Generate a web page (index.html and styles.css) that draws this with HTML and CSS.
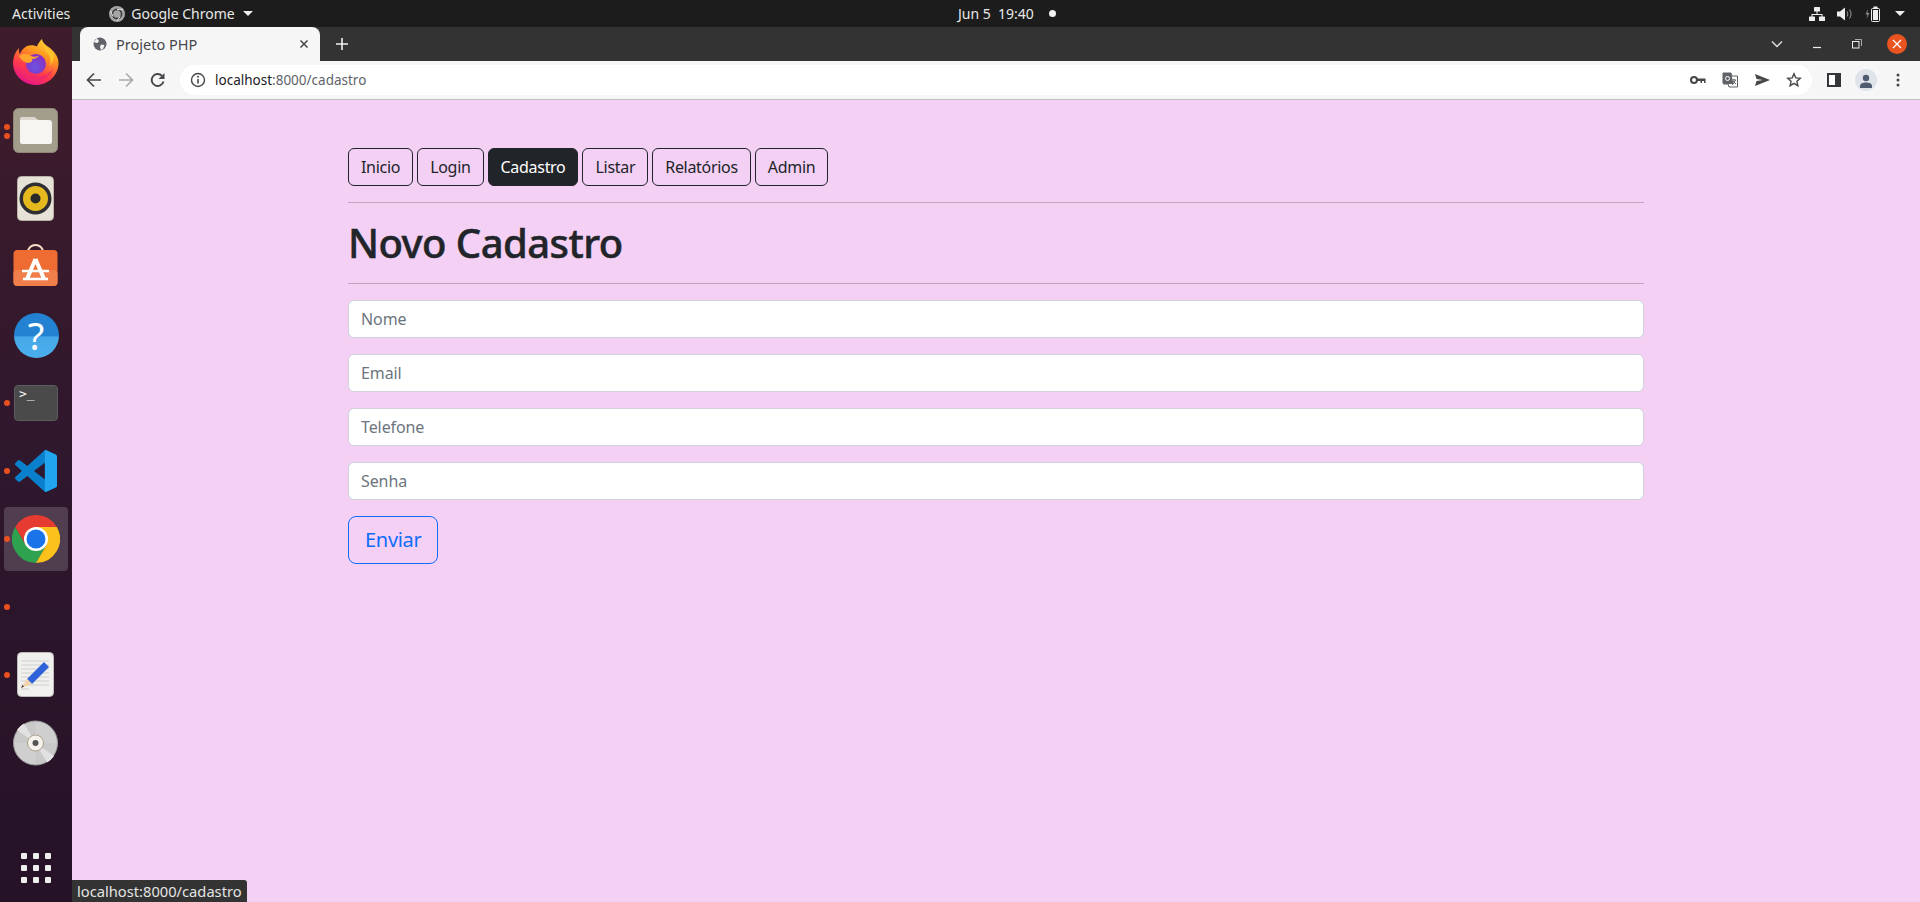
FILE: index.html
```html
<!DOCTYPE html>
<html lang="pt-BR">
<head>
  <meta charset="UTF-8" />
  <title>Projeto PHP</title>
  <link rel="stylesheet" href="styles.css">
</head>
<body>

  <!-- gnome top bar -->
  <div class="topbar">
    <div class="topbar-left">
      <span>Activities</span>
      <span class="app-name">
        <svg width="16" height="16" viewBox="0 0 16 16"><circle cx="8" cy="8" r="8" fill="#a5a5a5"/><circle cx="8" cy="8" r="4.600" fill="none" stroke="#3a3a3a" stroke-width="1.600"/><path d="M8 3.400h6M4 10.500L1.500 5M11 10.500L8 15" stroke="#e4e4e4" stroke-width="1"/></svg>
        Google Chrome
        <i class="caret"></i>
      </span>
    </div>
    <div class="clock">Jun 5&nbsp;&nbsp;19:40 <i class="clock-dot"></i></div>
    <div class="tray">
      <svg width="16" height="14" viewBox="0 0 16 14" fill="#eee"><rect x="5" y="0" width="6" height="4.500" rx=".6"/><rect x="0" y="9.500" width="6" height="4.500" rx=".6"/><rect x="10" y="9.500" width="6" height="4.500" rx=".6"/><path d="M7.500 4h1v3h5v3h-1V8h-9v2h-1V7h5z"/></svg>
      <svg width="16" height="14" viewBox="0 0 16 14"><path d="M0 4.500h3L8 .5v13l-5-4H0z" fill="#eee"/><path d="M10 4.500q1.500 2.500 0 5M12.500 2.500q3 4.500 0 9" fill="none" stroke="#888" stroke-width="1.100"/></svg>
      <svg width="16" height="16" viewBox="0 0 16 16"><path d="M3 3L0.500 8.500h2L1.500 13l3-6h-2z" fill="#888"/><rect x="6.500" y="2.500" width="8" height="13" rx="1" fill="none" stroke="#eee"/><rect x="8.500" y="0.500" width="4" height="2" fill="#eee"/><rect x="8" y="4" width="5" height="10" fill="#eee"/></svg>
      <i class="caret"></i>
    </div>
  </div>

  <div class="desktop">

    <!-- ubuntu dock -->
    <nav class="dock">
      <div class="dock-item">
        <svg class="firefox" width="46" height="46" viewBox="0 0 46 46">
          <defs>
            <linearGradient id="ffBody" x1="0.850" y1="0" x2="0.350" y2="1"><stop offset="0" stop-color="#ffe13d"/><stop offset=".35" stop-color="#ff9a1f"/><stop offset=".7" stop-color="#ff3a4c"/><stop offset="1" stop-color="#e5148a"/></linearGradient>
            <radialGradient id="ffGlobe" cx=".45" cy=".65" r=".6"><stop offset="0" stop-color="#6a55e4"/><stop offset="1" stop-color="#8a2fc0"/></radialGradient>
          </defs>
          <path d="M29 0c.5 4 4 6 8 9 6 5 8.500 10 8.500 15 0 12-10 22-22.500 22S0 36 0 24c0-6 2-11 6-15-.5 2.500 0 4.500 1 6 1-3 3-6 7-8 4-1.500 8-.5 10 .5C25 4.500 27 2 29 0z" fill="url(#ffBody)"/>
          <path d="M6 30c2 8 10 13 18 12 7-1 13-5 16-12-4 5-9 8-16 8S10 35 6 30z" fill="#f02a6a"/>
          <circle cx="23" cy="25" r="10" fill="url(#ffGlobe)"/>
          <path d="M6 17c4-3 9-2 12 0 3 1.500 6 .5 8-.5-1.500 2.500-4 3.500-7 3.500 1 2-1 3-3 4-4 0-8-3-10-7z" fill="#ffa52e"/>
          <path d="M30 4c-1 5 3 8 6 12 2 3 2 8 1 11 3-4 5-9 3-13-2-3-7-5-10-10z" fill="#ffc32b"/>
        </svg>
      </div>
      <div class="dock-item">
        <i class="dots"><b></b><b></b></i>
        <svg width="46" height="46" viewBox="0 0 46 46">
          <rect x=".5" y=".5" width="44" height="44" rx="5" fill="#a39d8c" stroke="#8e8878"/>
          <path d="M7 12a3 3 0 0 1 3-3h11l4 3h11a3 3 0 0 1 3 3v19a2 2 0 0 1-2 2H9a2 2 0 0 1-2-2z" fill="#f7f5f2"/>
          <path d="M7 12a3 3 0 0 1 3-3h11l4 3z" fill="#dcd8cf"/>
        </svg>
      </div>
      <div class="dock-item">
        <svg width="38" height="46" viewBox="0 0 38 46">
          <rect x=".5" y=".5" width="36" height="44" rx="4" fill="#e6e2d8" stroke="#b8b3a6"/>
          <circle cx="18.500" cy="22.500" r="16" fill="#2f2f33"/>
          <circle cx="18.500" cy="22.500" r="12.500" fill="#e6b91e"/>
          <circle cx="18.500" cy="22.500" r="5" fill="#2a2a2a"/>
        </svg>
      </div>
      <div class="dock-item">
        <svg width="46" height="46" viewBox="0 0 46 46">
          <path d="M15 8a7.500 7 0 0 1 15 0" fill="none" stroke="#f8dcc4" stroke-width="2"/>
          <rect x=".5" y="6" width="44" height="36" rx="4" fill="#ee6b32"/>
          <rect x=".5" y="26" width="44" height="16" rx="4" fill="#f07f4b"/>
          <path d="M22.500 15L14 35M22.500 15L31 35" stroke="#fff" stroke-width="4" fill="none"/>
          <path d="M9 27h27M10 35h25" stroke="#fff" stroke-width="2.400"/>
        </svg>
      </div>
      <div class="dock-item">
        <div class="help-icon">?</div>
      </div>
      <div class="dock-item">
        <i class="dots"><b></b></i>
        <div class="terminal-icon">&gt;_</div>
      </div>
      <div class="dock-item">
        <i class="dots"><b></b></i>
        <svg width="42" height="42" viewBox="0 0 100 100">
          <path fill="#0a7fcb" fill-rule="evenodd" d="M96.500 10.800 75.900.9a6.200 6.200 0 0 0-7.100 1.200L29.400 38 12.200 25a4.200 4.200 0 0 0-5.300.2l-5.500 5a4.200 4.200 0 0 0 0 6.200L16.300 50 1.400 63.600a4.200 4.200 0 0 0 0 6.200l5.500 5a4.200 4.200 0 0 0 5.300.2L29.400 62l39.400 35.900a6.200 6.200 0 0 0 7.100 1.200l20.600-9.900A6.200 6.200 0 0 0 100 83.600V16.400a6.200 6.200 0 0 0-3.500-5.600zM75 72.700 45.100 50 75 27.300z"/>
          <path fill="#21a5ee" d="M75.900 99.100 96.500 89.200A6.200 6.200 0 0 0 100 83.600V16.400a6.200 6.200 0 0 0-3.500-5.600L75.900.9A6.200 6.200 0 0 0 71 1v98a6.200 6.200 0 0 0 4.900.1z"/>
        </svg>
      </div>
      <div class="dock-item dock-item-active">
        <i class="dots"><b></b></i>
        <svg width="48" height="48" viewBox="0 0 48 48">
          <path d="M24 12H44.800A24 24 0 0 0 3.200 12L13.600 30z" fill="#e53b30"/>
          <path d="M13.600 30L3.200 12A24 24 0 0 0 24 48L34.400 30z" fill="#2fa24f"/>
          <path d="M34.400 30L24 48A24 24 0 0 0 44.800 12H24z" fill="#fcc11a"/>
          <circle cx="24" cy="24" r="12" fill="#fff"/>
          <circle cx="24" cy="24" r="9.500" fill="#1a73e8"/>
        </svg>
      </div>
      <div class="dock-item">
        <i class="dots"><b></b></i>
      </div>
      <div class="dock-item">
        <i class="dots"><b></b></i>
        <svg width="38" height="46" viewBox="0 0 38 46">
          <rect x=".5" y=".5" width="36" height="44" rx="4" fill="#f0f0ee" stroke="#bdbdb8"/>
          <path d="M4 9h28M4 13h28M4 17h28M4 21h28M4 25h28M4 29h28M4 33h28M4 37h8" stroke="#cfcfcc"/>
          <path d="M10 27L27 10l5 5-17 17z" fill="#2e62d9"/>
          <path d="M10 27l5 5-11 4z" fill="#f3d3ae"/>
          <path d="M4 36l1.500-3 1.500 1.500z" fill="#333"/>
        </svg>
      </div>
      <div class="dock-item">
        <svg width="46" height="46" viewBox="0 0 46 46">
          <circle cx="22.500" cy="23" r="22" fill="#cfcfcf" stroke="#9a9a9a"/>
          <path d="M4 10L22.500 23 11 3.500A22 22 0 0 0 4 10zM41 36L22.500 23 34 42.500A22 22 0 0 0 41 36z" fill="#f5f5f5"/>
          <path d="M22.500 1v22L1 23A22 22 0 0 1 22.500 1zM22.500 45V23h22A22 22 0 0 1 22.500 45z" fill="#bdbdbd" opacity=".35"/>
          <circle cx="22.500" cy="23" r="8" fill="#f4f2ea" stroke="#a89f88"/>
          <circle cx="22.500" cy="23" r="3" fill="#555"/>
        </svg>
      </div>
      <div class="dock-item dock-apps">
        <div class="apps-grid"><b></b><b></b><b></b><b></b><b></b><b></b><b></b><b></b><b></b></div>
      </div>
    </nav>

    <div class="browser">
      <div class="tabstrip">
        <div class="tab">
          <svg width="16" height="16" viewBox="0 0 16 16"><circle cx="8" cy="8" r="6.500" fill="#5f6368"/><path d="M5 2.500L7 5 5.500 7 3 6.500 1.800 6zM9 8.500l3.500.5L11 13l-2 1-1-3z" fill="#f6f6f6"/></svg>
          <span class="tab-title">Projeto PHP</span>
          <svg class="tab-close" width="10" height="10" viewBox="0 0 10 10"><path d="M1.500 1.500l7 7M8.500 1.500l-7 7" stroke="#45474a" stroke-width="1.500"/></svg>
        </div>
        <svg class="new-tab" width="12" height="12" viewBox="0 0 12 12"><path d="M6 0v12M0 6h12" stroke="#f1f1f1" stroke-width="1.600"/></svg>
        <div class="window-controls">
          <span class="win-btn"><svg width="12" height="8" viewBox="0 0 12 8"><path d="M1 1.500l5 5 5-5" fill="none" stroke="#ddd" stroke-width="1.500"/></svg></span>
          <span class="win-btn"><svg width="10" height="10" viewBox="0 0 10 10"><path d="M1 8.500h8" stroke="#eee" stroke-width="1.200"/></svg></span>
          <span class="win-btn"><svg width="10" height="10" viewBox="0 0 10 10"><rect x=".5" y="2.500" width="6.500" height="6.500" fill="none" stroke="#eee"/><path d="M3 .5h6.500V7" fill="none" stroke="#aaa"/></svg></span>
          <span class="win-close"><svg width="10" height="10" viewBox="0 0 10 10"><path d="M1 1l8 8M9 1l-8 8" stroke="#fff" stroke-width="1.300"/></svg></span>
        </div>
      </div>

      <div class="toolbar">
        <span class="tool-btn"><svg width="16" height="16" viewBox="0 0 16 16"><path d="M15 8H2M8 1.500L1.500 8 8 14.500" fill="none" stroke="#45474a" stroke-width="1.700"/></svg></span>
        <span class="tool-btn"><svg width="16" height="16" viewBox="0 0 16 16"><path d="M1 8h13M8 1.500L14.500 8 8 14.500" fill="none" stroke="#a9abad" stroke-width="1.700"/></svg></span>
        <span class="tool-btn"><svg width="16" height="16" viewBox="0 0 16 16"><path d="M13.500 9.500A6 6 0 1 1 12 3.800" fill="none" stroke="#45474a" stroke-width="1.900"/><path d="M14.500 1v6h-6z" fill="#45474a"/></svg></span>
        <div class="omnibox">
          <svg width="16" height="16" viewBox="0 0 16 16"><circle cx="8" cy="8" r="6.500" fill="none" stroke="#45474a" stroke-width="1.400"/><path d="M8 7v4.500" stroke="#45474a" stroke-width="1.600"/><circle cx="8" cy="4.800" r="1" fill="#45474a"/></svg>
          <span class="url"><span class="url-host">localhost</span>:8000/cadastro</span>
          <div class="omni-actions">
            <span class="tool-btn"><svg width="16" height="10" viewBox="0 0 16 10"><circle cx="4" cy="5" r="3" fill="none" stroke="#45474a" stroke-width="2"/><path d="M7 3.500h8.500V8h-1.500V6H12v2h-1.500V6H7z" fill="#45474a"/></svg></span>
            <span class="tool-btn"><svg width="16" height="16" viewBox="0 0 16 16"><path d="M1 1h8l1 3h5.500v11H7l-1-3H2a1 1 0 0 1-1-1z" fill="#fff" stroke="#5f6368"/><path d="M1 1h8l2.500 11H2a1 1 0 0 1-1-1z" fill="#5f6368"/><circle cx="5.500" cy="6.500" r="2" fill="none" stroke="#fff"/><path d="M10 8h4M12 7v1M10.500 13l3-5M11 9l3 3" stroke="#5f6368"/></svg></span>
            <span class="tool-btn"><svg width="15" height="12" viewBox="0 0 15 12"><path d="M0 0l15 6-15 6 1.500-5L8 6 1.500 5z" fill="#45474a"/></svg></span>
            <span class="tool-btn"><svg width="16" height="16" viewBox="0 0 16 16"><path d="M8 1.800l1.800 4.100 4.500.4-3.400 3 1 4.400L8 11.400l-3.900 2.300 1-4.400-3.400-3 4.500-.4z" fill="none" stroke="#45474a" stroke-width="1.400"/></svg></span>
          </div>
        </div>
        <span class="tool-btn"><svg width="14" height="14" viewBox="0 0 14 14"><rect x="1" y="1" width="12" height="12" fill="#fff" stroke="#35363a" stroke-width="2"/><rect x="8" y="1" width="5" height="12" fill="#35363a"/></svg></span>
        <span class="tool-btn"><span class="avatar"><svg width="14" height="14" viewBox="0 0 14 14" fill="#4f5b6e"><circle cx="7" cy="4" r="3.200"/><path d="M1 14v-2c0-2.500 3-3.500 6-3.500s6 1 6 3.500v2z"/></svg></span></span>
        <span class="tool-btn"><svg width="4" height="14" viewBox="0 0 4 14" fill="#45474a"><circle cx="2" cy="2" r="1.500"/><circle cx="2" cy="7" r="1.500"/><circle cx="2" cy="12" r="1.500"/></svg></span>
      </div>

      <!-- page -->
      <main class="page">
        <div class="container">
          <div class="menu">
            <a class="btn-menu" href="#">Inicio</a>
            <a class="btn-menu" href="#">Login</a>
            <a class="btn-menu active" href="#">Cadastro</a>
            <a class="btn-menu" href="#">Listar</a>
            <a class="btn-menu" href="#">Relatórios</a>
            <a class="btn-menu" href="#">Admin</a>
          </div>
          <hr>
          <h1>Novo Cadastro</h1>
          <hr>
          <form>
            <input type="text" placeholder="Nome">
            <input type="email" placeholder="Email">
            <input type="text" placeholder="Telefone">
            <input type="password" placeholder="Senha">
            <button type="submit">Enviar</button>
          </form>
        </div>
        <div class="status-link">localhost:8000/cadastro</div>
      </main>
    </div>
  </div>

</body>
</html>
```

FILE: styles.css
```css
* {
  box-sizing: border-box;
}

html, body {
  height: 100%;
}

body {
  margin: 0;
  font-family: 'Noto Sans', 'Open Sans', sans-serif;
  color: #212529;
  display: flex;
  flex-direction: column;
  overflow: hidden;
}

/* top bar */
.topbar {
  height: 27px;
  background-color: #1c1c1c;
  color: #e8e8e8;
  font-size: 14px;
  display: flex;
  align-items: center;
  justify-content: space-between;
  padding: 0 12px;
  position: relative;
}

.topbar-left {
  display: flex;
  align-items: center;
  gap: 39px;
}

.app-name {
  display: flex;
  align-items: center;
  gap: 6px;
}

.caret {
  display: inline-block;
  border-left: 5px solid transparent;
  border-right: 5px solid transparent;
  border-top: 5px solid #eee;
  margin-left: 2px;
}

.clock {
  position: absolute;
  left: 958px;
  display: flex;
  align-items: center;
  gap: 15px;
}

.clock-dot {
  width: 7px;
  height: 7px;
  border-radius: 50%;
  background-color: #f2f2f2;
}

.tray {
  display: flex;
  align-items: center;
  gap: 12px;
  padding-right: 3px;
}

.desktop {
  flex: 1;
  display: flex;
  min-height: 0;
}

/* dock */
.dock {
  width: 72px;
  flex-shrink: 0;
  padding-top: 2px;
  background: linear-gradient(#3f1c2b, #2f172d 50%, #251226);
  display: flex;
  flex-direction: column;
}

.dock-item {
  height: 68px;
  flex-shrink: 0;
  display: flex;
  align-items: center;
  justify-content: center;
  position: relative;
}

.dock-item-active::before {
  content: "";
  position: absolute;
  left: 4px;
  top: 2px;
  width: 64px;
  height: 64px;
  border-radius: 4px;
  background-color: rgba(255, 255, 255, 0.17);
}

.dock-item svg {
  position: relative;
}

.dock-item .firefox {
  margin-top: -2px;
}

.dots {
  position: absolute;
  left: 4px;
  top: 0;
  bottom: 0;
  display: flex;
  flex-direction: column;
  justify-content: center;
  gap: 3px;
}

.dots b {
  display: block;
  width: 6px;
  height: 6px;
  border-radius: 50%;
  background-color: #e9501f;
}

.help-icon {
  width: 45px;
  height: 45px;
  border-radius: 50%;
  background: linear-gradient(#2383d2 50%, #46a8e8 54%, #4aaeec);
  color: white;
  font-family: 'Noto Sans', sans-serif;
  font-size: 38px;
  line-height: 45px;
  text-align: center;
}

.terminal-icon {
  width: 44px;
  height: 36px;
  border-radius: 4px;
  background-color: #4a4a4a;
  border: 1px solid #5c5c5c;
  color: #f2f2f2;
  font-family: 'DejaVu Sans Mono', monospace;
  font-size: 13px;
  line-height: 14px;
  padding: 1px 4px;
}

.dock-apps {
  margin-top: auto;
}

.apps-grid {
  display: grid;
  grid-template-columns: repeat(3, 6px);
  gap: 6px;
}

.apps-grid b {
  height: 6px;
  border-radius: 1px;
  background-color: #eeeeee;
}

/* chrome */
.browser {
  flex: 1;
  min-width: 0;
  display: flex;
  flex-direction: column;
}

.tabstrip {
  height: 34px;
  background-color: #333333;
  display: flex;
  align-items: flex-end;
  padding-left: 8px;
}

.tab {
  width: 240px;
  height: 34px;
  background-color: #f6f6f6;
  border-radius: 8px 8px 0 0;
  display: flex;
  align-items: center;
  padding: 0 11px 0 12px;
  gap: 8px;
  color: #45474a;
  font-size: 14.5px;
}

.tab-title {
  flex: 1;
}

.new-tab {
  margin: 0 0 11px 16px;
}

.window-controls {
  margin-left: auto;
  height: 34px;
  display: flex;
  align-items: center;
  padding-right: 13px;
}

.win-btn {
  width: 40px;
  display: flex;
  justify-content: center;
}

.win-close {
  width: 20px;
  height: 20px;
  margin-left: 10px;
  border-radius: 50%;
  background-color: #e95420;
  display: flex;
  align-items: center;
  justify-content: center;
}

.toolbar {
  height: 39px;
  background-color: #f6f6f6;
  border-bottom: 1px solid #bfbfbf;
  display: flex;
  align-items: center;
  padding: 0 6px;
}

.tool-btn {
  width: 32px;
  height: 32px;
  flex-shrink: 0;
  display: flex;
  align-items: center;
  justify-content: center;
}

.omnibox {
  flex: 1;
  height: 30px;
  margin: 0 6px;
  padding: 0 2px 0 10px;
  background-color: white;
  border-radius: 15px;
  display: flex;
  align-items: center;
  gap: 9px;
}

.url {
  font-size: 13.5px;
  color: #5f6368;
}

.url-host {
  color: #202124;
}

.omni-actions {
  margin-left: auto;
  display: flex;
}

.avatar {
  width: 22px;
  height: 22px;
  border-radius: 50%;
  background-color: #dfe3ea;
  display: flex;
  align-items: flex-end;
  justify-content: center;
  padding-bottom: 3px;
}

/* pagina */
.page {
  flex: 1;
  position: relative;
  background-color: #f4d0f5;
  padding-top: 48px;
}

.container {
  width: 1320px;
  margin: 0 auto;
  padding: 0 12px;
}

.menu {
  display: flex;
  gap: 4px;
}

.btn-menu {
  height: 38px;
  padding: 6px 12px;
  border: 1px solid #212529;
  border-radius: 6px;
  color: #212529;
  font-size: 16px;
  letter-spacing: -0.3px;
  line-height: 24px;
  text-decoration: none;
}

.btn-menu.active {
  background-color: #212529;
  color: white;
}

hr {
  margin: 16px 0;
  border: 0;
  border-top: 1px solid #212529;
  opacity: 0.25;
}

h1 {
  margin: 0;
  font-size: 40px;
  font-weight: 500;
  letter-spacing: -0.55px;
  -webkit-text-stroke: 0.5px #212529;
  line-height: 48px;
}

input {
  display: block;
  width: 100%;
  height: 38px;
  margin-bottom: 16px;
  padding: 6px 12px;
  border: 1px solid #ced4da;
  border-radius: 6px;
  background-color: white;
  font-family: inherit;
  font-size: 16px;
  letter-spacing: -0.1px;
}

input::placeholder {
  color: #6c757d;
}

button {
  display: block;
  height: 48px;
  padding: 7px 16px 9px;
  border: 1px solid #0d6efd;
  border-radius: 8px;
  background: transparent;
  color: #0d6efd;
  font-family: inherit;
  font-size: 20px;
  letter-spacing: -0.3px;
}

.status-link {
  position: absolute;
  left: 0;
  bottom: 0;
  height: 22px;
  padding: 0 5px;
  border-radius: 0 3px 0 0;
  background-color: #333333;
  color: #e4e4e4;
  font-size: 14.7px;
  line-height: 22px;
}
```
